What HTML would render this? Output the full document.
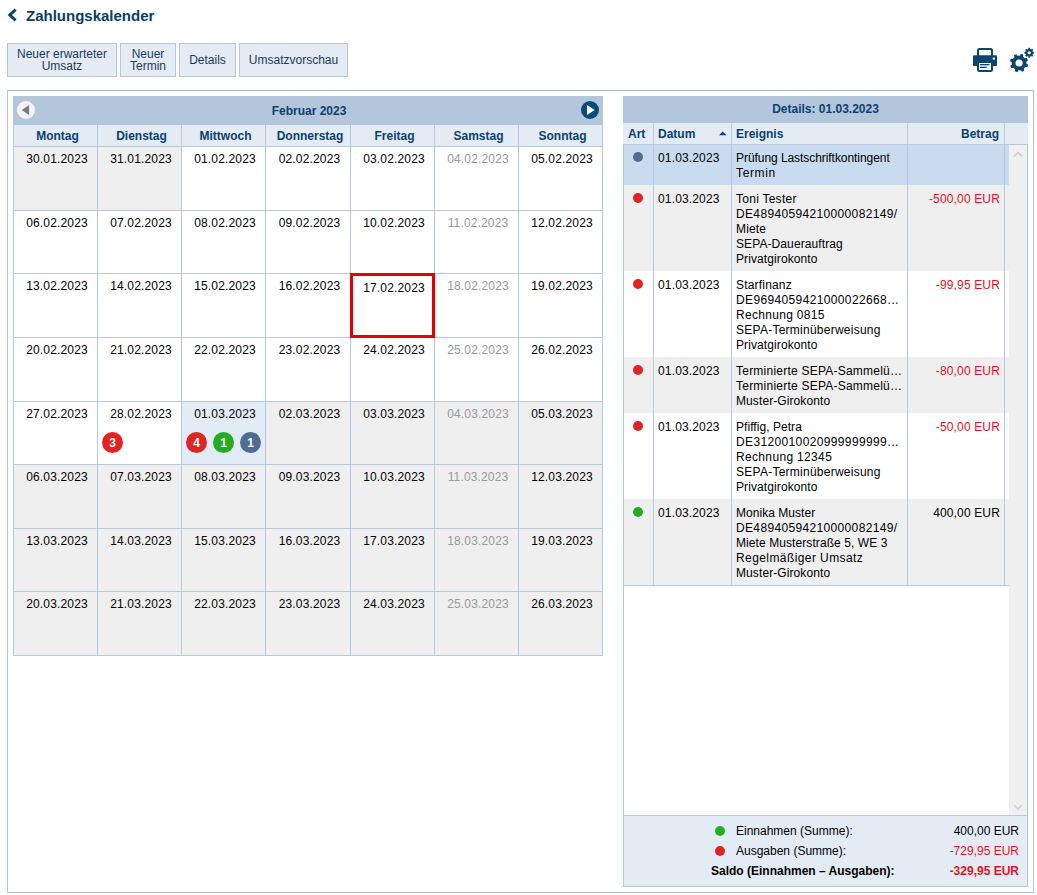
<!DOCTYPE html><html><head><meta charset="utf-8"><style>
*{box-sizing:border-box;margin:0;padding:0}
html,body{width:1037px;height:895px;overflow:hidden;background:#fff}
body{font-family:"Liberation Sans",sans-serif;font-size:12px;color:#000;position:relative}
.a{position:absolute}
.title{left:26px;top:7px;font-size:15px;font-weight:bold;color:#0b3d66;line-height:18px;white-space:nowrap}
.btn{position:absolute;top:43px;height:34px;background:#e4ebf5;border:1px solid #b7c7db;color:#1b3a5a;font-size:12px;line-height:12px;text-align:center;display:flex;align-items:center;justify-content:center}
.outer{left:7px;top:90px;width:1027px;height:803px;border:1px solid #b8c7da;border-top-color:#b3bdca;border-bottom-color:#b3bdca}
.calhead{left:13px;top:96px;width:590px;height:29px;background:#b4c6dc}
.mtitle{left:13px;top:97px;width:590px;height:28px;line-height:28px;text-align:center;font-weight:bold;color:#0c4070;padding-left:2px}
.colh{top:125px;height:21px;background:#e3ebf5;color:#0c4070;font-weight:bold;text-align:center;line-height:21px;padding-top:1px;padding-left:5px}
.cell{background:#fff;text-align:center;padding-top:6px;padding-left:4px;line-height:14px}
.g{background:#efefef}
.sel{background:#e3ebf5}
.sat{color:#999}
.vl{width:1px;background:#b8c9de}
.hl{height:1px;background:#b8c9de}
.bub{position:absolute;width:21px;height:21px;border-radius:50%;color:#fff;font-weight:bold;text-align:center;line-height:23px;font-size:12px}
.red{background:#e02424}.grn{background:#24ac24}.blu{background:#4e6c95}
.dhead{left:623px;top:96px;width:405px;height:27px;background:#b4c6dc;color:#0c4070;font-weight:bold;text-align:center;line-height:27px}
.dcolh{top:123px;height:21px;background:#e3ebf5;color:#0c4070;font-weight:bold;line-height:21px;padding-top:1px;white-space:nowrap}
.drow{left:624px;width:385px}
.dt{line-height:15px;white-space:nowrap}
.neg{color:#e3141c}
.num{letter-spacing:0.15px}
</style></head><body>
<svg class="a" style="left:7px;top:8px" width="11" height="14" viewBox="0 0 11 14"><path d="M8.6 1.6 L2.8 7 L8.6 12.4" fill="none" stroke="#0b4270" stroke-width="2.9" stroke-linejoin="miter"/></svg>
<div class="a title">Zahlungskalender</div>
<div class="btn" style="left:7px;width:110px">Neuer erwarteter<br>Umsatz</div>
<div class="btn" style="left:120px;width:56px">Neuer<br>Termin</div>
<div class="btn" style="left:179px;width:57px">Details</div>
<div class="btn" style="left:239px;width:109px">Umsatzvorschau</div>
<svg class="a" style="left:968px;top:44px" width="34" height="32" viewBox="0 0 34 32"><rect x="10" y="5" width="14" height="8" rx="1.5" fill="none" stroke="#0a446f" stroke-width="2"/><rect x="5" y="11.3" width="24" height="10.8" rx="1.2" fill="#0a446f"/><rect x="10" y="18" width="14" height="9" rx="1.5" fill="#fff" stroke="#0a446f" stroke-width="2"/><rect x="12" y="20" width="9.5" height="1.3" fill="#0a446f"/><rect x="12" y="22.7" width="6.7" height="1.3" fill="#0a446f"/><circle cx="25.8" cy="14.6" r="1.2" fill="#fff"/></svg>
<svg class="a" style="left:1005px;top:42px" width="32" height="34" viewBox="0 0 32 34"><path fill-rule="evenodd" fill="#0a446f" d="M14.81 13.63 L15.86 11.87 L18.34 12.72 L18.08 14.76 L19.81 16.29 L21.80 15.79 L22.95 18.14 L21.32 19.40 L21.47 21.71 L23.23 22.76 L22.38 25.24 L20.34 24.98 L18.81 26.71 L19.31 28.70 L16.96 29.85 L15.70 28.22 L13.39 28.37 L12.34 30.13 L9.86 29.28 L10.12 27.24 L8.39 25.71 L6.40 26.21 L5.25 23.86 L6.88 22.60 L6.73 20.29 L4.97 19.24 L5.82 16.76 L7.86 17.02 L9.39 15.29 L8.89 13.30 L11.24 12.15 L12.50 13.78 Z M10.50 21.00 a3.6 3.6 0 1 0 7.20 0 a3.6 3.6 0 1 0 -7.20 0 Z"/><path fill-rule="evenodd" fill="#0a446f" d="M23.29 7.01 L23.53 5.84 L24.87 5.84 L25.11 7.01 L26.24 7.47 L27.23 6.83 L28.17 7.77 L27.53 8.76 L27.99 9.89 L29.16 10.13 L29.16 11.47 L27.99 11.71 L27.53 12.84 L28.17 13.83 L27.23 14.77 L26.24 14.13 L25.11 14.59 L24.87 15.76 L23.53 15.76 L23.29 14.59 L22.16 14.13 L21.17 14.77 L20.23 13.83 L20.87 12.84 L20.41 11.71 L19.24 11.47 L19.24 10.13 L20.41 9.89 L20.87 8.76 L20.23 7.77 L21.17 6.83 L22.16 7.47 Z M22.60 10.80 a1.6 1.6 0 1 0 3.20 0 a1.6 1.6 0 1 0 -3.20 0 Z"/></svg>
<div class="a outer"></div>
<div class="a calhead"></div><div class="a mtitle">Februar 2023</div>
<svg class="a" style="left:17px;top:101px" width="18" height="18"><circle cx="9" cy="9" r="9" fill="#f3f4f6"/><path d="M4.6 9 L12.1 4 L12.1 14 Z" fill="#7c7c7c"/></svg>
<svg class="a" style="left:581px;top:101px" width="18" height="18"><circle cx="9" cy="9" r="9" fill="#0a4a78"/><path d="M6 4 L13.7 9 L6 14 Z" fill="#fff"/></svg>
<div class="a colh" style="left:13px;width:84px">Montag</div>
<div class="a colh" style="left:97px;width:84px">Dienstag</div>
<div class="a colh" style="left:181px;width:84px">Mittwoch</div>
<div class="a colh" style="left:265px;width:85px">Donnerstag</div>
<div class="a colh" style="left:350px;width:84px">Freitag</div>
<div class="a colh" style="left:434px;width:84px">Samstag</div>
<div class="a colh" style="left:518px;width:84px">Sonntag</div>
<div class="a cell g" style="left:13px;top:146px;width:84px;height:64px;padding-top:6px"><span class="num">30.01.2023</span></div>
<div class="a cell g" style="left:97px;top:146px;width:84px;height:64px;padding-top:6px"><span class="num">31.01.2023</span></div>
<div class="a cell" style="left:181px;top:146px;width:84px;height:64px;padding-top:6px"><span class="num">01.02.2023</span></div>
<div class="a cell" style="left:265px;top:146px;width:85px;height:64px;padding-top:6px"><span class="num">02.02.2023</span></div>
<div class="a cell" style="left:350px;top:146px;width:84px;height:64px;padding-top:6px"><span class="num">03.02.2023</span></div>
<div class="a cell sat" style="left:434px;top:146px;width:84px;height:64px;padding-top:6px"><span class="num">04.02.2023</span></div>
<div class="a cell" style="left:518px;top:146px;width:84px;height:64px;padding-top:6px"><span class="num">05.02.2023</span></div>
<div class="a cell" style="left:13px;top:210px;width:84px;height:63px;padding-top:6px"><span class="num">06.02.2023</span></div>
<div class="a cell" style="left:97px;top:210px;width:84px;height:63px;padding-top:6px"><span class="num">07.02.2023</span></div>
<div class="a cell" style="left:181px;top:210px;width:84px;height:63px;padding-top:6px"><span class="num">08.02.2023</span></div>
<div class="a cell" style="left:265px;top:210px;width:85px;height:63px;padding-top:6px"><span class="num">09.02.2023</span></div>
<div class="a cell" style="left:350px;top:210px;width:84px;height:63px;padding-top:6px"><span class="num">10.02.2023</span></div>
<div class="a cell sat" style="left:434px;top:210px;width:84px;height:63px;padding-top:6px"><span class="num">11.02.2023</span></div>
<div class="a cell" style="left:518px;top:210px;width:84px;height:63px;padding-top:6px"><span class="num">12.02.2023</span></div>
<div class="a cell" style="left:13px;top:273px;width:84px;height:64px;padding-top:6px"><span class="num">13.02.2023</span></div>
<div class="a cell" style="left:97px;top:273px;width:84px;height:64px;padding-top:6px"><span class="num">14.02.2023</span></div>
<div class="a cell" style="left:181px;top:273px;width:84px;height:64px;padding-top:6px"><span class="num">15.02.2023</span></div>
<div class="a cell" style="left:265px;top:273px;width:85px;height:64px;padding-top:6px"><span class="num">16.02.2023</span></div>
<div class="a cell" style="left:350px;top:273px;width:84px;height:64px;padding-top:8px"><span class="num">17.02.2023</span></div>
<div class="a cell sat" style="left:434px;top:273px;width:84px;height:64px;padding-top:6px"><span class="num">18.02.2023</span></div>
<div class="a cell" style="left:518px;top:273px;width:84px;height:64px;padding-top:6px"><span class="num">19.02.2023</span></div>
<div class="a cell" style="left:13px;top:337px;width:84px;height:64px;padding-top:6px"><span class="num">20.02.2023</span></div>
<div class="a cell" style="left:97px;top:337px;width:84px;height:64px;padding-top:6px"><span class="num">21.02.2023</span></div>
<div class="a cell" style="left:181px;top:337px;width:84px;height:64px;padding-top:6px"><span class="num">22.02.2023</span></div>
<div class="a cell" style="left:265px;top:337px;width:85px;height:64px;padding-top:6px"><span class="num">23.02.2023</span></div>
<div class="a cell" style="left:350px;top:337px;width:84px;height:64px;padding-top:6px"><span class="num">24.02.2023</span></div>
<div class="a cell sat" style="left:434px;top:337px;width:84px;height:64px;padding-top:6px"><span class="num">25.02.2023</span></div>
<div class="a cell" style="left:518px;top:337px;width:84px;height:64px;padding-top:6px"><span class="num">26.02.2023</span></div>
<div class="a cell" style="left:13px;top:401px;width:84px;height:63px;padding-top:6px"><span class="num">27.02.2023</span></div>
<div class="a cell" style="left:97px;top:401px;width:84px;height:63px;padding-top:6px"><span class="num">28.02.2023</span></div>
<div class="a cell sel" style="left:181px;top:401px;width:84px;height:63px;padding-top:6px"><span class="num">01.03.2023</span></div>
<div class="a cell g" style="left:265px;top:401px;width:85px;height:63px;padding-top:6px"><span class="num">02.03.2023</span></div>
<div class="a cell g" style="left:350px;top:401px;width:84px;height:63px;padding-top:6px"><span class="num">03.03.2023</span></div>
<div class="a cell g sat" style="left:434px;top:401px;width:84px;height:63px;padding-top:6px"><span class="num">04.03.2023</span></div>
<div class="a cell g" style="left:518px;top:401px;width:84px;height:63px;padding-top:6px"><span class="num">05.03.2023</span></div>
<div class="a cell g" style="left:13px;top:464px;width:84px;height:64px;padding-top:6px"><span class="num">06.03.2023</span></div>
<div class="a cell g" style="left:97px;top:464px;width:84px;height:64px;padding-top:6px"><span class="num">07.03.2023</span></div>
<div class="a cell g" style="left:181px;top:464px;width:84px;height:64px;padding-top:6px"><span class="num">08.03.2023</span></div>
<div class="a cell g" style="left:265px;top:464px;width:85px;height:64px;padding-top:6px"><span class="num">09.03.2023</span></div>
<div class="a cell g" style="left:350px;top:464px;width:84px;height:64px;padding-top:6px"><span class="num">10.03.2023</span></div>
<div class="a cell g sat" style="left:434px;top:464px;width:84px;height:64px;padding-top:6px"><span class="num">11.03.2023</span></div>
<div class="a cell g" style="left:518px;top:464px;width:84px;height:64px;padding-top:6px"><span class="num">12.03.2023</span></div>
<div class="a cell g" style="left:13px;top:528px;width:84px;height:63px;padding-top:6px"><span class="num">13.03.2023</span></div>
<div class="a cell g" style="left:97px;top:528px;width:84px;height:63px;padding-top:6px"><span class="num">14.03.2023</span></div>
<div class="a cell g" style="left:181px;top:528px;width:84px;height:63px;padding-top:6px"><span class="num">15.03.2023</span></div>
<div class="a cell g" style="left:265px;top:528px;width:85px;height:63px;padding-top:6px"><span class="num">16.03.2023</span></div>
<div class="a cell g" style="left:350px;top:528px;width:84px;height:63px;padding-top:6px"><span class="num">17.03.2023</span></div>
<div class="a cell g sat" style="left:434px;top:528px;width:84px;height:63px;padding-top:6px"><span class="num">18.03.2023</span></div>
<div class="a cell g" style="left:518px;top:528px;width:84px;height:63px;padding-top:6px"><span class="num">19.03.2023</span></div>
<div class="a cell g" style="left:13px;top:591px;width:84px;height:64px;padding-top:6px"><span class="num">20.03.2023</span></div>
<div class="a cell g" style="left:97px;top:591px;width:84px;height:64px;padding-top:6px"><span class="num">21.03.2023</span></div>
<div class="a cell g" style="left:181px;top:591px;width:84px;height:64px;padding-top:6px"><span class="num">22.03.2023</span></div>
<div class="a cell g" style="left:265px;top:591px;width:85px;height:64px;padding-top:6px"><span class="num">23.03.2023</span></div>
<div class="a cell g" style="left:350px;top:591px;width:84px;height:64px;padding-top:6px"><span class="num">24.03.2023</span></div>
<div class="a cell g sat" style="left:434px;top:591px;width:84px;height:64px;padding-top:6px"><span class="num">25.03.2023</span></div>
<div class="a cell g" style="left:518px;top:591px;width:84px;height:64px;padding-top:6px"><span class="num">26.03.2023</span></div>
<div class="a vl" style="left:13px;top:124px;height:532px"></div>
<div class="a vl" style="left:97px;top:124px;height:532px"></div>
<div class="a vl" style="left:181px;top:124px;height:532px"></div>
<div class="a vl" style="left:265px;top:124px;height:532px"></div>
<div class="a vl" style="left:350px;top:124px;height:532px"></div>
<div class="a vl" style="left:434px;top:124px;height:532px"></div>
<div class="a vl" style="left:518px;top:124px;height:532px"></div>
<div class="a vl" style="left:602px;top:124px;height:532px"></div>
<div class="a hl" style="left:13px;top:146px;width:590px"></div>
<div class="a hl" style="left:13px;top:210px;width:590px"></div>
<div class="a hl" style="left:13px;top:273px;width:590px"></div>
<div class="a hl" style="left:13px;top:337px;width:590px"></div>
<div class="a hl" style="left:13px;top:401px;width:590px"></div>
<div class="a hl" style="left:13px;top:464px;width:590px"></div>
<div class="a hl" style="left:13px;top:528px;width:590px"></div>
<div class="a hl" style="left:13px;top:591px;width:590px"></div>
<div class="a hl" style="left:13px;top:655px;width:590px"></div>
<div class="a" style="left:350px;top:273px;width:85px;height:65px;border:3px solid #e80000"></div>
<div class="bub red" style="left:102px;top:432px">3</div>
<div class="bub red" style="left:186px;top:432px">4</div>
<div class="bub grn" style="left:213px;top:432px">1</div>
<div class="bub blu" style="left:240px;top:432px">1</div>
<div class="a" style="left:623px;top:96px;width:405px;height:791px;border:1px solid #b8c9de;border-top:none"></div>
<div class="a dhead">Details: 01.03.2023</div>
<div class="a dcolh" style="left:623px;width:405px"></div>
<div class="a dcolh" style="left:628px">Art</div>
<div class="a dcolh" style="left:658px">Datum</div>
<svg class="a" style="left:718.5px;top:131px" width="8" height="5"><path d="M0 4.3 L3.7 0.5 L7.4 4.3 Z" fill="#0c4070"/></svg>
<div class="a dcolh" style="left:736px">Ereignis</div>
<div class="a dcolh" style="left:907px;width:92px;text-align:right">Betrag</div>
<div class="a" style="left:624px;top:144px;width:385px;height:41px;background:#c8dbef"></div>
<div class="a" style="left:633px;top:152px;width:10px;height:10px;border-radius:50%;background:#4e6c95"></div>
<div class="a dt num" style="left:658px;top:151px">01.03.2023</div>
<div class="a dt" style="left:736px;top:151px"><span style="letter-spacing:-0.061px">Prüfung Lastschriftkontingent</span><br><span style="letter-spacing:0.64px">Termin</span></div>
<div class="a hl" style="left:623px;top:185px;width:386px"></div>
<div class="a" style="left:624px;top:185px;width:385px;height:86px;background:#efefef"></div>
<div class="a" style="left:633px;top:193px;width:10px;height:10px;border-radius:50%;background:#e02424"></div>
<div class="a dt num" style="left:658px;top:192px">01.03.2023</div>
<div class="a dt" style="left:736px;top:192px"><span style="letter-spacing:0.26px">Toni Tester</span><br><span style="letter-spacing:0.345px">DE48940594210000082149/</span><br><span style="letter-spacing:0.15px">Miete</span><br><span style="letter-spacing:0.094px">SEPA-Dauerauftrag</span><br><span style="letter-spacing:0.1px">Privatgirokonto</span></div>
<div class="a dt num neg" style="left:907px;width:93px;text-align:right;top:192px">-500,00 EUR</div>
<div class="a hl" style="left:623px;top:271px;width:386px"></div>
<div class="a" style="left:624px;top:271px;width:385px;height:86px;background:#fff"></div>
<div class="a" style="left:633px;top:279px;width:10px;height:10px;border-radius:50%;background:#e02424"></div>
<div class="a dt num" style="left:658px;top:278px">01.03.2023</div>
<div class="a dt" style="left:736px;top:278px"><span style="letter-spacing:0.189px">Starfinanz</span><br><span style="letter-spacing:0.362px">DE9694059421000022668…</span><br><span style="letter-spacing:0.308px">Rechnung 0815</span><br><span style="letter-spacing:0.252px">SEPA-Terminüberweisung</span><br><span style="letter-spacing:0.1px">Privatgirokonto</span></div>
<div class="a dt num neg" style="left:907px;width:93px;text-align:right;top:278px">-99,95 EUR</div>
<div class="a hl" style="left:623px;top:357px;width:386px"></div>
<div class="a" style="left:624px;top:357px;width:385px;height:56px;background:#efefef"></div>
<div class="a" style="left:633px;top:365px;width:10px;height:10px;border-radius:50%;background:#e02424"></div>
<div class="a dt num" style="left:658px;top:364px">01.03.2023</div>
<div class="a dt" style="left:736px;top:364px"><span style="letter-spacing:0.229px">Terminierte SEPA-Sammelü…</span><br><span style="letter-spacing:0.229px">Terminierte SEPA-Sammelü…</span><br><span style="letter-spacing:0.093px">Muster-Girokonto</span></div>
<div class="a dt num neg" style="left:907px;width:93px;text-align:right;top:364px">-80,00 EUR</div>
<div class="a hl" style="left:623px;top:413px;width:386px"></div>
<div class="a" style="left:624px;top:413px;width:385px;height:86px;background:#fff"></div>
<div class="a" style="left:633px;top:421px;width:10px;height:10px;border-radius:50%;background:#e02424"></div>
<div class="a dt num" style="left:658px;top:420px">01.03.2023</div>
<div class="a dt" style="left:736px;top:420px"><span style="letter-spacing:0.054px">Pfiffig, Petra</span><br><span style="letter-spacing:0.362px">DE3120010020999999999…</span><br><span style="letter-spacing:0.338px">Rechnung 12345</span><br><span style="letter-spacing:0.252px">SEPA-Terminüberweisung</span><br><span style="letter-spacing:0.1px">Privatgirokonto</span></div>
<div class="a dt num neg" style="left:907px;width:93px;text-align:right;top:420px">-50,00 EUR</div>
<div class="a hl" style="left:623px;top:499px;width:386px"></div>
<div class="a" style="left:624px;top:499px;width:385px;height:86px;background:#efefef"></div>
<div class="a" style="left:633px;top:507px;width:10px;height:10px;border-radius:50%;background:#24ac24"></div>
<div class="a dt num" style="left:658px;top:506px">01.03.2023</div>
<div class="a dt" style="left:736px;top:506px"><span style="letter-spacing:0.042px">Monika Muster</span><br><span style="letter-spacing:0.345px">DE48940594210000082149/</span><br><span style="letter-spacing:0.08px">Miete Musterstraße 5, WE 3</span><br><span style="letter-spacing:0.417px">Regelmäßiger Umsatz</span><br><span style="letter-spacing:0.093px">Muster-Girokonto</span></div>
<div class="a dt num " style="left:907px;width:93px;text-align:right;top:506px">400,00 EUR</div>
<div class="a hl" style="left:623px;top:585px;width:386px"></div>
<div class="a hl" style="left:623px;top:144px;width:405px"></div>
<div class="a vl" style="left:653px;top:122px;height:463px"></div>
<div class="a vl" style="left:731px;top:122px;height:463px"></div>
<div class="a vl" style="left:907px;top:122px;height:463px"></div>
<div class="a vl" style="left:1004px;top:122px;height:463px"></div>
<div class="a" style="left:1009px;top:145px;width:18px;height:670px;background:#f0f0f0"></div>
<svg class="a" style="left:1009px;top:145px" width="18" height="18"><path d="M5 11.5 L9 7.5 L13 11.5" fill="none" stroke="#d0d0d0" stroke-width="1.7"/></svg>
<svg class="a" style="left:1009px;top:797px" width="18" height="18"><path d="M5 8 L9 12 L13 8" fill="none" stroke="#d0d0d0" stroke-width="1.7"/></svg>
<div class="a" style="left:623px;top:815px;width:405px;height:72px;background:#e3ebf5;border:1px solid #b8c9de"></div>
<div class="a" style="left:715px;top:826px;width:10px;height:10px;border-radius:50%;background:#24ac24"></div>
<div class="a" style="left:715px;top:846px;width:10px;height:10px;border-radius:50%;background:#e02424"></div>
<div class="a dt" style="left:736px;top:821px;line-height:20px">Einnahmen (Summe):<br>Ausgaben (Summe):</div>
<div class="a dt" style="left:711px;top:861px;line-height:20px;font-weight:bold">Saldo (Einnahmen – Ausgaben):</div>
<div class="a dt" style="left:900px;width:119px;text-align:right;top:821px;line-height:20px">400,00 EUR<br><span class="neg">-729,95 EUR</span><br><b class="neg">-329,95 EUR</b></div>
</body></html>
